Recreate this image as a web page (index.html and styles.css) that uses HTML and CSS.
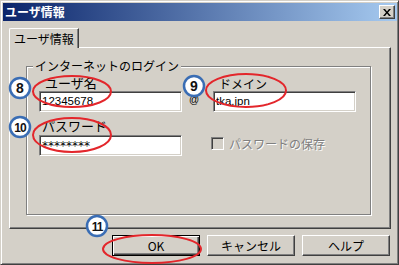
FILE: index.html
```html
<!DOCTYPE html>
<html lang="ja">
<head>
    <meta charset="UTF-8">
    <title>ユーザ情報</title>
    <link rel="stylesheet" href="styles.css">
</head>
<body>
    <div class="window">
        <div class="titlebar">
            <span class="title">ユーザ情報</span>
            <button class="close-btn">
                <svg width="8" height="7" viewBox="0 0 8 7"><path d="M0 0h2l2 2.5L6 0h2L5 3.5 8 7H6L4 4.5 2 7H0l3-3.5z" fill="#000"/></svg>
            </button>
        </div>

        <div class="content">
            <div class="tabs">
                <div class="tab active">ユーザ情報</div>
            </div>

            <div class="panel">
                <fieldset class="group">
                    <legend>インターネットのログイン</legend>
                    <div class="fields">
                        <label class="lbl big">ユーザ名</label>
                        <span></span>
                        <label class="lbl small">ドメイン</label>

                        <input class="edit" type="text" value="12345678">
                        <span class="at">@</span>
                        <input class="edit" type="text" value="tka.jpn">

                        <label class="lbl big pw">パスワード</label>
                        <span></span>
                        <span></span>

                        <input class="edit secret" type="text" value="********">
                        <span></span>
                        <div class="check disabled">
                            <span class="box"></span>
                            <span>パスワードの保存</span>
                        </div>
                    </div>
                </fieldset>
            </div>

            <div class="buttons">
                <button class="btn default">OK</button>
                <button class="btn">キャンセル</button>
                <button class="btn">ヘルプ</button>
            </div>
        </div>

        <!-- annotation marks -->
        <svg class="marks" width="399" height="265" viewBox="0 0 399 265">
            <g fill="none" stroke="#e3262b" stroke-width="2">
                <ellipse cx="72" cy="91.5" rx="39" ry="15.5"/>
                <ellipse cx="246" cy="90.5" rx="40" ry="16.5"/>
                <ellipse cx="72" cy="135" rx="39" ry="17"/>
                <ellipse cx="152" cy="249" rx="49" ry="14"/>
            </g>
            <g fill="#fff" stroke="#3a6db4" stroke-width="2.5">
                <circle cx="20" cy="88" r="10"/>
                <circle cx="194" cy="86" r="10"/>
                <circle cx="20" cy="127" r="10"/>
                <circle cx="97" cy="226" r="10"/>
            </g>
            <g class="num" text-anchor="middle">
                <text x="20" y="93">8</text>
                <text x="194" y="91">9</text>
                <text x="20" y="132" class="two">10</text>
                <text x="97" y="231" class="two">11</text>
            </g>
        </svg>
    </div>
</body>
</html>
```

FILE: styles.css
```css
body {
    margin: 0;
    padding: 0;
    width: 399px;
    height: 265px;
    overflow: hidden;
    font-family: 'Noto Sans CJK JP', sans-serif;
    font-size: 12px;
    color: #000;
}

.window {
    position: relative;
    box-sizing: border-box;
    width: 399px;
    height: 265px;
    padding: 1px;
    background: #d4d0c8;
    border: 1px solid;
    border-color: #d4d0c8 #404040 #404040 #d4d0c8;
    box-shadow: inset 1px 1px 0 #fff, inset -1px -1px 0 #808080;
}

.titlebar {
    display: flex;
    align-items: center;
    height: 18px;
    margin: 1px 0 0 1px;
    padding-left: 2px;
    background: linear-gradient(to right, #0a246a, #a6caf0);
    color: #fff;
}

.title {
    font-weight: bold;
    font-size: 12px;
    line-height: 18px;
}

.close-btn {
    margin-left: auto;
    margin-right: 2px;
    width: 16px;
    height: 14px;
    padding: 0;
    display: flex;
    align-items: center;
    justify-content: center;
    background: #d4d0c8;
    border: 1px solid;
    border-color: #fff #404040 #404040 #fff;
    box-shadow: inset -1px -1px 0 #808080;
}

.content {
    padding: 7px 6px 0 7px;
}

.tabs {
    display: flex;
}

.tab {
    position: relative;
    z-index: 1;
    box-sizing: border-box;
    width: 70px;
    height: 20px;
    margin-bottom: -1px;
    padding-top: 2px;
    text-align: center;
    line-height: 15px;
    background: #d4d0c8;
    border-top: 1px solid #fff;
    border-left: 1px solid #fff;
    border-right: 1px solid #404040;
    border-top-left-radius: 2px;
    box-shadow: inset -1px 0 0 #808080;
}

.panel {
    box-sizing: border-box;
    height: 182px;
    padding: 11px 19px 0 16px;
    border: 1px solid;
    border-color: #fff #404040 #404040 #fff;
    box-shadow: inset -1px -1px 0 #808080;
}

.group {
    box-sizing: border-box;
    height: 156px;
    margin: 0;
    padding: 0;
    border: 1px solid #808080;
    box-shadow: 1px 1px 0 #fff, inset 1px 1px 0 #fff;
}

.group legend {
    margin-left: 6px;
    padding: 0 2px;
    font-size: 12px;
    line-height: 14px;
    background: #d4d0c8;
}

.fields {
    display: grid;
    grid-template-columns: 143px 31px 143px;
    padding: 2px 0 0 12px;
}

.lbl {
    padding-left: 6px;
    line-height: 15px;
}

.lbl.big {
    font-size: 13px;
}

.lbl.small {
    font-size: 12px;
    padding-top: 1px;
}

.lbl.pw {
    padding-left: 3px;
    margin-top: 6px;
    margin-bottom: 2px;
}

.edit {
    box-sizing: border-box;
    width: 143px;
    height: 21px;
    margin: 0;
    padding: 0 2px 2px;
    font-family: 'Liberation Sans', sans-serif;
    font-size: 11.5px;
    line-height: 17px;
    color: #000;
    background: #fff;
    border: 1px solid;
    border-color: #808080 #fff #fff #808080;
    box-shadow: inset 1px 1px 0 #404040, inset -1px -1px 0 #d4d0c8;
    outline: none;
}

.edit.secret {
    font-family: 'DejaVu Sans', sans-serif;
    font-size: 12px;
    padding: 1px 2px 0;
}

.at {
    padding: 2px 0 0 7px;
    font-family: 'Liberation Sans', sans-serif;
    font-size: 10px;
    line-height: 14px;
}

.check {
    display: flex;
    align-items: center;
    gap: 5px;
    margin: 2px 0 0 -2px;
    height: 13px;
}

.check .box {
    box-sizing: border-box;
    width: 13px;
    height: 13px;
    background: #d4d0c8;
    border: 1px solid;
    border-color: #808080 #fff #fff #808080;
    box-shadow: inset 1px 1px 0 #404040, inset -1px -1px 0 #d4d0c8;
}

.check.disabled {
    color: #808080;
    text-shadow: 1px 1px 0 #fff;
}

.buttons {
    display: flex;
    justify-content: flex-end;
    gap: 7px;
    margin-top: 6px;
    padding-right: 1px;
}

.btn {
    box-sizing: border-box;
    width: 88px;
    height: 21px;
    padding: 0;
    font-family: 'Noto Sans CJK JP', sans-serif;
    font-size: 12px;
    color: #000;
    background: #d4d0c8;
    border: 1px solid;
    border-color: #fff #404040 #404040 #fff;
    box-shadow: inset -1px -1px 0 #808080;
}

.btn.default {
    border-color: #000;
    box-shadow: inset 1px 1px 0 #fff, inset -1px -1px 0 #404040, inset -2px -2px 0 #808080;
}

.marks {
    position: absolute;
    top: -1px;
    left: -1px;
    pointer-events: none;
}

.num text {
    font-family: 'Liberation Sans', sans-serif;
    font-weight: bold;
    font-size: 14px;
    fill: #111;
}

.num text.two {
    font-size: 12px;
    letter-spacing: -1px;
}
```
